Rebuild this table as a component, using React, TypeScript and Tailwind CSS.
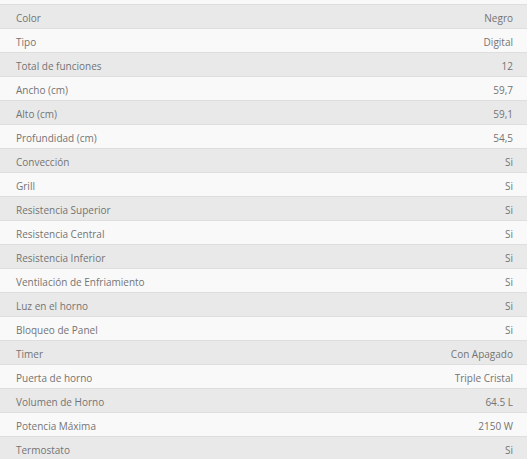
import React from 'react';

const specs: [string, string][] = [
  ['Color', 'Negro'],
  ['Tipo', 'Digital'],
  ['Total de funciones', '12'],
  ['Ancho (cm)', '59,7'],
  ['Alto (cm)', '59,1'],
  ['Profundidad (cm)', '54,5'],
  ['Convección', 'Si'],
  ['Grill', 'Si'],
  ['Resistencia Superior', 'Si'],
  ['Resistencia Central', 'Si'],
  ['Resistencia Inferior', 'Si'],
  ['Ventilación de Enfriamiento', 'Si'],
  ['Luz en el horno', 'Si'],
  ['Bloqueo de Panel', 'Si'],
  ['Timer', 'Con Apagado'],
  ['Puerta de horno', 'Triple Cristal'],
  ['Volumen de Horno', '64.5 L'],
  ['Potencia Máxima', '2150 W'],
  ['Termostato', 'Si'],
];

function App() {
  return (
    <div className="w-[529px] h-[459px] overflow-hidden bg-white font-['Open_Sans',sans-serif] text-[10px] text-[#747474]">
      <div className="w-[527px]">
        <div className="h-[5px] bg-[#f9f9f9] border-b border-[#dedede]"></div>
        {specs.map(([label, value], i) => (
          <div
            key={i}
            className={
              'flex items-center justify-between h-[24px] pl-4 pr-[14px] pt-[3px] border-b border-[#dedede] ' +
              (i % 2 === 0 ? 'bg-[#e9e9e9]' : 'bg-[#f9f9f9]')
            }
          >
            <span>{label}</span>
            <span>{value}</span>
          </div>
        ))}
      </div>
    </div>
  );
}

export default App;
